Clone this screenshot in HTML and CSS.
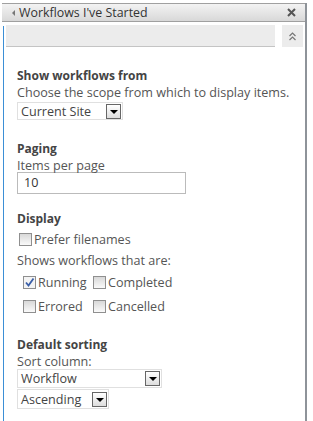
FILE: index.html
```html
<!DOCTYPE html>
<html lang="en">
  <head>
    <meta charset="utf-8" />
    <title>Workflows I've Started</title>
    <link rel="stylesheet" href="styles.css">
  </head>
  <body>
    <div class="pane">
      <div class="title">
        <span class="arrow"></span>
        <span class="title-text">Workflows I've Started</span>
        <svg class="close" width="9" height="9" viewBox="0 0 9 9">
          <path d="M1 1 L8 8 M8 1 L1 8" stroke="#555" stroke-width="2" />
        </svg>
      </div>

      <div class="body">
        <div class="toolbar">
          <div class="toolbar-bar"></div>
          <div class="toolbar-btn">
            <svg width="7" height="9" viewBox="0 0 7 9">
              <path d="M0.5 4 L3.5 1 L6.5 4 M0.5 8 L3.5 5 L6.5 8" fill="none" stroke="#777" stroke-width="1.2" />
            </svg>
          </div>
        </div>

        <div class="content">
          <div class="section scope">
            <div class="heading">Show workflows from</div>
            <div class="label">Choose the scope from which to display items.</div>
            <div class="select w-site">
              <span class="select-text">Current Site</span>
              <span class="select-btn"></span>
            </div>
          </div>

          <div class="section paging">
            <div class="heading">Paging</div>
            <div class="label">Items per page</div>
            <div class="textbox">10</div>
          </div>

          <div class="section display">
            <div class="heading">Display</div>
            <div class="check-row">
              <span class="check"></span><span>Prefer filenames</span>
            </div>
            <div class="label sub">Shows workflows that are:</div>
            <div class="check-grid">
              <div class="check-item"><span class="check checked">
                <svg width="11" height="11" viewBox="0 0 11 11">
                  <path d="M2 5.5 L4.5 8.5 L9.5 1.5" fill="none" stroke="#3a5fa8" stroke-width="1.8" />
                </svg>
              </span><span>Running</span></div>
              <div class="check-item"><span class="check"></span><span>Completed</span></div>
              <div class="check-item"><span class="check"></span><span>Errored</span></div>
              <div class="check-item"><span class="check"></span><span>Cancelled</span></div>
            </div>
          </div>

          <div class="section">
            <div class="heading">Default sorting</div>
            <div class="label">Sort column:</div>
            <div class="select w-column tight">
              <span class="select-text">Workflow</span>
              <span class="select-btn"></span>
            </div>
            <div class="select w-order">
              <span class="select-text">Ascending</span>
              <span class="select-btn"></span>
            </div>
          </div>
        </div>

        <div class="footer"></div>
      </div>
    </div>
  </body>
</html>
```

FILE: styles.css
```css
body {
  margin: 0;
  padding: 0;
  background: #fff;
  font-family: "Open Sans", "Noto Sans", sans-serif;
  font-size: 12.6px;
  color: #555;
}

.pane {
  margin: 3px 0 0 2px;
  width: 303px;
  height: 418px;
  border-right: 2px solid #8e9399;
  display: flex;
  flex-direction: column;
}

.title {
  height: 22px;
  border-top: 1px solid #a0a0a0;
  border-bottom: 1px solid #a0a0a0;
  background: linear-gradient(#f3f3f3, #d8d8d8);
  display: flex;
  align-items: center;
  padding: 0 9px 0 10px;
}

.arrow {
  width: 0;
  height: 0;
  border-top: 3px solid transparent;
  border-bottom: 3px solid transparent;
  border-right: 3px solid #777;
  margin-right: 4px;
}

.title-text {
  flex: 1;
  font-size: 12.4px;
  color: #333;
}

.close {
  display: block;
}

.body {
  flex: 1;
  margin: 4px 0 0 1px;
  border-left: 1px solid #3b8fd6;
  display: flex;
  flex-direction: column;
}

.toolbar {
  display: flex;
  gap: 7px;
  margin-left: 2px;
  margin-top: -1px;
}

.toolbar-bar {
  flex: 1;
  height: 21px;
  background: #ececec;
  border-bottom: 1px solid #c4c4c4;
}

.toolbar-btn {
  width: 21px;
  height: 22px;
  background: #ececec;
  margin-right: 2px;
  display: flex;
  align-items: center;
  justify-content: center;
}

.content {
  flex: 1;
  padding: 20px 0 0 13px;
}

.section {
  margin-bottom: 19px;
}

.scope {
  margin-bottom: 20px;
}

.paging {
  margin-bottom: 16px;
}

.display {
  margin-bottom: 21px;
}

.heading {
  font-weight: bold;
  font-size: 12px;
  line-height: 17px;
  color: #444;
}

.label {
  line-height: 17px;
}

.label.sub {
  margin-top: 4px;
}

.select {
  display: flex;
  align-items: center;
  justify-content: space-between;
  border: 1px solid #e0e0e0;
  padding: 0 1px 0 3px;
  box-sizing: border-box;
  height: 18px;
  margin-top: 1px;
  color: #444;
}

.select.tight {
  margin-top: -1px;
  margin-bottom: 1px;
  height: 19px;
}

.w-site {
  width: 106px;
}

.w-column {
  width: 145px;
}

.w-order {
  width: 92px;
  height: 20px;
  margin-top: 0;
}

.select-btn {
  width: 13px;
  height: 13px;
  border: 1px solid #666;
  background: linear-gradient(#fff, #ddd);
  position: relative;
}

.select-btn::after {
  content: "";
  position: absolute;
  left: 3px;
  top: 5px;
  border-left: 4px solid transparent;
  border-right: 4px solid transparent;
  border-top: 4px solid #000;
}

.textbox {
  width: 169px;
  height: 22px;
  box-sizing: border-box;
  border: 1px solid #bbb;
  padding: 2px 6px;
  margin-top: -2px;
  line-height: 16px;
  color: #333;
}

.check-row {
  display: flex;
  align-items: center;
  gap: 2px;
  line-height: 17px;
  margin: 4px 0 0 2px;
}

.check-grid {
  display: grid;
  grid-template-columns: 70px auto;
  row-gap: 7px;
  margin: 5px 0 0 6px;
  line-height: 17px;
}

.check-item {
  display: flex;
  align-items: center;
  gap: 2px;
}

.check {
  width: 11px;
  height: 11px;
  border: 1px solid #8f8f8f;
  background: linear-gradient(#d8d8d8, #fafafa);
  display: flex;
  align-items: center;
  justify-content: center;
}

.check.checked {
  background: #f4f4f4;
}

.footer {
  height: 10px;
  margin-right: 2px;
  border-top: 1px solid #c6c6c6;
  background: #f0f0f0;
}
```
